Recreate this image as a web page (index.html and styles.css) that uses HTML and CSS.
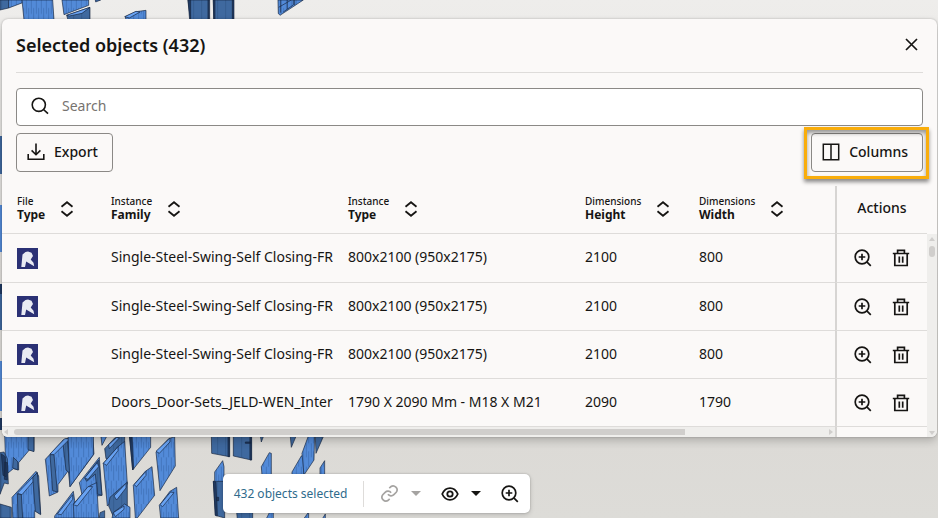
FILE: index.html
```html
<!DOCTYPE html>
<html lang="en">
<head>
<meta charset="utf-8">
<title>Selected objects</title>
<link rel="stylesheet" href="styles.css">
</head>
<body>
<svg class="scene" width="400" height="518" viewBox="0 0 400 518" aria-hidden="true">
  <defs>
    <pattern id="wood" width="15" height="70" patternUnits="userSpaceOnUse">
      <rect width="15" height="70" fill="#528ad8"/>
      <path d="M4 0v42M11 24v46" stroke="#3c6bb0" stroke-width="2"/>
    </pattern>
    <pattern id="dark" width="24" height="60" patternUnits="userSpaceOnUse">
      <rect width="24" height="60" fill="#3f699f"/>
      <path d="M5 0v60" stroke="#2f5588" stroke-width="2"/>
    </pattern>
  </defs>
  <!-- doors above the panel -->
  <g class="door" transform="scale(.3333)">
    <path class="deep" d="M0 0h28l-2 24-26 6z"/>
    <path class="face" d="M26 0h42v8L26 24z"/>
    <path class="face" d="M66 0h92l4 60H72z"/>
    <path class="face" d="M186 0h80v16l-74 28z"/>
    <path class="deep" d="M200 46l70-24v38h-66z"/>
    <path class="lite" d="M200 46l70-24-24 18-38 8z"/>
    <path class="face" d="M286 0h16l-15 6z"/>
    <path class="face" d="M376 50l32-15 30-4v30h-60z"/>
    <path class="lite" d="M374 50l34-16 12 2-32 18z"/>
    <path class="deep" d="M564 0h62v60h-54z"/>
    <path class="deep" d="M640 0h60v60h-58z"/>
    <path class="edge" d="M564 0h8v60h-3zM624 0h5v60h-5zM640 0h5v60h-4zM697 0h5v60h-5z"/>
    <path class="face" d="M834 0h76l-70 46-5-6z"/>
    <path class="line" d="M842 0v38M850 36L880 15V0M862 0v28M884 16V0M836 22l38-22"/>
  </g>
  <!-- slivers along the left side of the panel -->
  <g class="sliver">
    <path class="deep" d="M0 136h2v38H0z"/>
    <path class="face" d="M0 205h2v47H0z"/>
    <path class="edge" d="M0 284h2v10H0z"/>
    <path class="deep" d="M0 294h2v36H0z"/>
    <path class="face" d="M0 361h2v50H0z"/>
    <path class="edge" d="M0 418h2v12H0z"/>
  </g>
  <!-- doors below the panel, left cluster -->
  <g class="door" transform="translate(0 434) scale(.3333)">
    <path class="face" d="M14 0H102V50L88 48 56 86V108L40 104 18 122z"/>
    <path class="deep" d="M84 0h18v53l-18-6zM40 70l14 14v24l-16-6z"/>
    <path class="deep" d="M0 56l12-2 10 20 3 76-12-3-13 34z"/>
    <path class="edge" d="M4 60l12 8 2 60-9-4zM14 84l8 2v52l-9-2z"/>
    <path class="deep" d="M0 210l34 10v32H0z"/>
    <path class="face" d="M36 190L108 112 116 126 122 240 104 230V252H38z"/>
    <path class="lite" d="M52 178L104 124 112 116 112 128 66 182z"/>
    <path class="deep" d="M98 130l14-14 10 126-16-10zM52 180l12 2 4 70H54z"/>
    <path class="face" d="M136 76L190 18 210 12 278 0 282 60 210 158 205 110 174 152V174L148 186z"/>
    <path class="deep" d="M150 62l12 0 10 112-14-4zM188 20l14-6 8 104-12-10z"/>
    <path class="lite" d="M150 60l44-46h16l-48 48z"/>
    <path class="face" d="M204 0h76v62l-70 96z"/>
    <path class="face" d="M238 146L298 70 306 184 292 186 276 164 246 182z"/>
    <path class="deep" d="M254 132l42-54 10 106-14-4-6-60-26 22z"/>
    <path class="lite" d="M254 132l38-46 4 12-32 38z"/>
    <path class="face" d="M164 246L220 172 224 200V252h-60z"/>
    <path class="lite" d="M172 240l46-58v14l-34 46z"/>
    <path class="face" d="M220 210L268 156 290 146 296 252H222z"/>
    <path class="lite" d="M220 212l44-54h14l-46 58z"/>
    <path class="deep" d="M300 236l14-6v22h-16z"/>
    <path class="face" d="M302 0h22l-18 34z"/>
    <path class="deep" d="M314 44l30-32 30-8v70h-56z"/>
    <path class="lite" d="M326 32l24-22 8 2-30 32z"/>
    <path class="face" d="M310 88L354 38 374 22 382 150 322 216z"/>
    <path class="lite" d="M310 88l44-50v12l-34 44z"/>
    <path class="deep" d="M326 216l4-26 52-46v76l-40 32z"/>
    <path class="lite" d="M342 186l36-38v14l-28 36z"/>
    <path class="face" d="M340 236l34-26 16 10v32h-54z"/>
    <path class="lite" d="M340 236l32-20v10l-26 22z"/>
    <path class="face" d="M388 0h64v40l-54 68z"/>
    <path class="edge" d="M388 0h8l5 104-3 4z"/>
    <path class="face" d="M468 54L506 14 524 8 526 96 480 170z"/>
    <path class="lite" d="M468 52l42-40v12l-32 34z"/>
    <path class="face" d="M400 154L436 112 456 98 464 184 412 252H406z"/>
    <path class="lite" d="M402 152l36-40v12l-28 34z"/>
    <path class="face" d="M478 214L510 172 530 160 536 252H482z"/>
    <path class="lite" d="M480 212l32-38 10 2-34 42z"/>
  </g>
  <!-- doors below the panel, right cluster -->
  <g class="door" transform="translate(200 420) scale(.3333)">
    <path class="deep" d="M34 40h54v70l-53-10z"/>
    <path class="deep" d="M100 40h54v80l-54-12z"/>
    <path class="edge" d="M84 40h5v70h-5zM150 40h5v80h-5zM136 66l16 0v4h-16z"/>
    <path class="face" d="M44 156L68 122 72 140V190H44z"/>
    <path class="deep" d="M40 184h34v110L46 286z"/>
    <path class="edge" d="M40 184l8 2 4 102-6-2zM50 232h6v10h-6z"/>
    <path class="deep" d="M110 276h48v22h-46z"/>
    <path class="face" d="M184 140L208 98 214 100V165H186z"/>
    <path class="face" d="M198 298l10-20h12v20z"/>
    <path class="deep" d="M180 40h14l-10 26z"/>
    <path class="deep" d="M270 40h22l-18 42z"/>
    <path class="face" d="M276 156L304 108 312 104V165h-36z"/>
    <path class="face" d="M306 100L328 40h16L342 120 312 165z"/>
    <path class="deep" d="M346 50h24l-22 50z"/>
    <path class="face" d="M360 144l14-22v44h-14zM310 298l16-22v22zM366 298l10-16v16z"/>
  </g>
</svg>

<svg class="sprite" width="0" height="0" aria-hidden="true">
  <symbol id="i-sort" viewBox="0 0 14 16"><path d="M1.500 5.700L7 1.200l5.500 4.500M1.500 10.300L7 14.800l5.500-4.500" fill="none" stroke="currentColor" stroke-width="1.800"/></symbol>
  <symbol id="i-zoom" viewBox="0 0 18 18"><g fill="none" stroke="currentColor" stroke-width="1.700"><circle cx="8" cy="8" r="6.800"/><path d="M8 4.700v6.600M4.700 8h6.600M12.800 12.800l4 4"/></g></symbol>
  <symbol id="i-trash" viewBox="0 0 18 18"><g fill="none" stroke="currentColor" stroke-width="1.700"><path d="M.8 4.500h16.400M5.600 4.500V1.400h6.800v3.100M2.800 4.500v12h12.400v-12M7.300 7.400v6.400M10.700 7.400v6.400"/></g></symbol>
  <symbol id="i-rvt" viewBox="0 0 21 21"><rect width="21" height="21" fill="#2b3175"/><path d="M5.500 6.500l3-2.500 2.500-.6 3.500 1.400 1.500 3.200-2.300 3.500 2.800 3.200.7 3.600-6-3.500-2-1.400L8 19H4.300z" fill="#e9ebf3"/></symbol>
</svg>

<section class="panel" aria-labelledby="title">
  <header class="head">
    <h1 id="title">Selected objects (432)</h1>
    <button class="close" aria-label="Close"><svg width="13" height="13" viewBox="0 0 13 13"><path d="M1 1l11 11M12 1L1 12" stroke="currentColor" stroke-width="1.700"/></svg></button>
  </header>

  <div class="tools">
    <label class="search">
      <svg width="18" height="18" viewBox="0 0 18 18" aria-hidden="true"><g fill="none" stroke="currentColor" stroke-width="1.600"><circle cx="7.800" cy="7.800" r="6.600"/><path d="M12.500 12.500l4.500 4.200"/></g></svg>
      <input type="search" placeholder="Search" aria-label="Search">
    </label>
    <div class="buttons">
      <button class="btn"><svg width="18" height="18" viewBox="0 0 18 18" aria-hidden="true"><path d="M9 .5v11M4.600 7.400L9 11.700l4.400-4.300M1.200 11v5.300h15.600V11" fill="none" stroke="currentColor" stroke-width="1.600"/></svg>Export</button>
      <div class="marked">
        <button class="btn"><svg width="18" height="18" viewBox="0 0 18 18" aria-hidden="true"><path d="M1.300 1.300h15.400v15.400H1.300zM9 1v16" fill="none" stroke="currentColor" stroke-width="1.500"/></svg>Columns</button>
      </div>
    </div>
  </div>

  <div class="grid">
    <table>
      <colgroup><col class="c-file"><col class="c-family"><col class="c-type"><col class="c-height"><col class="c-width"><col class="c-actions"></colgroup>
      <thead>
        <tr>
          <th><button class="sort"><span>File<b>Type</b></span><svg width="14" height="16"><use href="#i-sort"/></svg></button></th>
          <th><button class="sort"><span>Instance<b>Family</b></span><svg width="14" height="16"><use href="#i-sort"/></svg></button></th>
          <th><button class="sort"><span>Instance<b>Type</b></span><svg width="14" height="16"><use href="#i-sort"/></svg></button></th>
          <th><button class="sort"><span>Dimensions<b>Height</b></span><svg width="14" height="16"><use href="#i-sort"/></svg></button></th>
          <th><button class="sort"><span>Dimensions<b>Width</b></span><svg width="14" height="16"><use href="#i-sort"/></svg></button></th>
          <th class="actions">Actions</th>
        </tr>
      </thead>
      <tbody>
        <tr>
          <td><svg class="file" width="21" height="21"><use href="#i-rvt"/></svg></td>
          <td>Single-Steel-Swing-Self Closing-FR</td><td>800x2100 (950x2175)</td><td>2100</td><td>800</td>
          <td class="actions"><button aria-label="Zoom to object"><svg width="18" height="18"><use href="#i-zoom"/></svg></button><button aria-label="Delete"><svg width="18" height="18"><use href="#i-trash"/></svg></button></td>
        </tr>
        <tr>
          <td><svg class="file" width="21" height="21"><use href="#i-rvt"/></svg></td>
          <td>Single-Steel-Swing-Self Closing-FR</td><td>800x2100 (950x2175)</td><td>2100</td><td>800</td>
          <td class="actions"><button aria-label="Zoom to object"><svg width="18" height="18"><use href="#i-zoom"/></svg></button><button aria-label="Delete"><svg width="18" height="18"><use href="#i-trash"/></svg></button></td>
        </tr>
        <tr>
          <td><svg class="file" width="21" height="21"><use href="#i-rvt"/></svg></td>
          <td>Single-Steel-Swing-Self Closing-FR</td><td>800x2100 (950x2175)</td><td>2100</td><td>800</td>
          <td class="actions"><button aria-label="Zoom to object"><svg width="18" height="18"><use href="#i-zoom"/></svg></button><button aria-label="Delete"><svg width="18" height="18"><use href="#i-trash"/></svg></button></td>
        </tr>
        <tr>
          <td><svg class="file" width="21" height="21"><use href="#i-rvt"/></svg></td>
          <td>Doors_Door-Sets_JELD-WEN_Interi</td><td>1790 X 2090 Mm - M18 X M21</td><td>2090</td><td>1790</td>
          <td class="actions"><button aria-label="Zoom to object"><svg width="18" height="18"><use href="#i-zoom"/></svg></button><button aria-label="Delete"><svg width="18" height="18"><use href="#i-trash"/></svg></button></td>
        </tr>
      </tbody>
    </table>
    <div class="vbar"><i class="up"></i><i class="thumb"></i><i class="down"></i></div>
    <div class="foot">
      <div class="hbar"><i class="left"></i><div class="track"><i class="thumb"></i></div><i class="right"></i></div>
      <div class="stub"></div>
    </div>
  </div>
</section>

<div class="toolbar">
  <a href="#title">432 objects selected</a>
  <span class="sep"></span>
  <button class="off" disabled aria-label="Link"><svg width="19" height="19" viewBox="0 0 24 24"><path d="M10 13a5 5 0 0 0 7.500.5l3-3a5 5 0 0 0-7-7l-1.800 1.700M14 11a5 5 0 0 0-7.500-.5l-3 3a5 5 0 0 0 7 7l1.700-1.700" fill="none" stroke="currentColor" stroke-width="2.100"/></svg><i class="caret"></i></button>
  <button aria-label="Visibility"><svg width="18" height="14" viewBox="0 0 18 14"><g fill="none" stroke="currentColor" stroke-width="1.800"><path d="M1.200 7C3 3 5.800 1.100 9 1.100S15 3 16.800 7C15 11 12.200 12.900 9 12.900S3 11 1.200 7z"/><circle cx="9" cy="7" r="2.700"/></g></svg><i class="caret"></i></button>
  <button class="last" aria-label="Zoom in"><svg width="18" height="18"><use href="#i-zoom"/></svg></button>
</div>
</body>
</html>
```

FILE: styles.css
```css
* { box-sizing: border-box; }

body {
  margin: 0;
  min-height: 100vh;
  padding: 19px 1px 5px 2px;
  display: flex;
  flex-direction: column;
  justify-content: space-between;
  overflow: hidden;
  background: linear-gradient(#eeedeb, #e2e0dd 50%, #dcdad6 85%, #dddcd8);
  color: #161513;
  font: 14px/20px "Noto Sans", "Open Sans", sans-serif;
}

button {
  border: 0;
  padding: 0;
  background: none;
  color: inherit;
  font: inherit;
}

svg { display: block; flex: none; }

.scene { position: absolute; left: 0; top: 0; z-index: -1; }
.sprite { position: absolute; }
.door { stroke: #16263f; stroke-width: 2; }
.face { fill: url(#wood); }
.deep { fill: url(#dark); }
.lite { fill: #68a2f2; }
.edge { fill: #203a62; }
.line { fill: none; }
.sliver .face { fill: #528ad8; }
.sliver .deep { fill: #3f699f; }

.panel {
  border-radius: 6px;
  background: #fbf9f8;
  box-shadow: 0 0 2px rgba(0, 0, 0, .25), 0 4px 8px rgba(0, 0, 0, .2);
  overflow: hidden;
}

.head {
  display: flex;
  align-items: center;
  justify-content: space-between;
  margin: 0 14px;
  height: 54px;
  padding-bottom: 2px;
  border-bottom: 1px solid #dedcda;
}

h1 { margin: 0; font-size: 18px; line-height: 24px; font-weight: 600; }
.close { padding: 5px; }

.tools {
  display: flex;
  flex-direction: column;
  gap: 7px;
  padding: 15px 14px 14px;
}

.search {
  display: flex;
  align-items: center;
  gap: 13px;
  height: 38px;
  padding: 0 14px 2px;
  border: 1px solid #8b8986;
  border-radius: 4px;
  background: #fff;
}

.search input {
  flex: 1;
  min-width: 0;
  border: 0;
  padding: 0;
  outline: 0;
  background: none;
  font: inherit;
}

.search input::placeholder { color: #77736f; opacity: 1; }

.buttons { display: flex; justify-content: space-between; }

.btn {
  display: flex;
  align-items: center;
  gap: 9px;
  height: 39px;
  padding: 0 14px 2px 10px;
  border: 1px solid #8b8986;
  border-radius: 4px;
  font-weight: 500;
}

.marked { position: relative; }

.marked::after {
  content: "";
  position: absolute;
  inset: -6px -6px -7px -7px;
  border: 3px solid #f9ad0b;
  box-shadow: 0 3px 4px rgba(0, 0, 0, .45), inset 0 3px 4px rgba(0, 0, 0, .4);
  pointer-events: none;
}

.grid { display: grid; grid-template-columns: minmax(0, 1fr) 10px; }

table { width: 100%; table-layout: fixed; border-collapse: separate; border-spacing: 0; }
.c-file { width: 94px; }
.c-family { width: 237px; }
.c-type { width: 237px; }
.c-height { width: 114px; }
.c-actions { width: 92px; }

th, td {
  height: 48px;
  padding: 0 0 2px 15px;
  border-bottom: 1px solid #dedcda;
  text-align: left;
  white-space: nowrap;
  overflow: hidden;
}

th { padding-bottom: 4px; font-weight: 500; }
tbody tr:first-child td { height: 49px; }
.file { margin-top: 2px; }

.sort {
  display: flex;
  align-items: center;
  gap: 15px;
  text-align: left;
  font-size: 10px;
  line-height: 14px;
}

.sort b { display: block; font-size: 12px; }
.sort svg { margin-top: 2px; }

th.actions, td.actions {
  padding-left: 0;
  border-left: 2px solid #d7d5d3;
  text-align: center;
}

td.actions button { display: inline-block; margin: 0 10px; vertical-align: middle; }

.vbar {
  grid-row: 1 / span 2;
  grid-column: 2;
  display: flex;
  flex-direction: column;
  align-items: center;
  margin-top: 48px;
  padding: 3px 0 2px;
  background: #efeeec;
}

.vbar .thumb { width: 6px; height: 11px; margin: 5px 0 auto; border-radius: 3px; background: #d0cecc; }

.up, .down, .left, .right { width: 0; height: 0; border: 3px solid transparent; }
.up { border-top: 0; border-bottom: 4px solid #d0cecc; }
.down { border-bottom: 0; border-top: 4px solid #d0cecc; }
.left { border-left: 0; border-right: 4px solid #d0cecc; }
.right { border-right: 0; border-left: 4px solid #d0cecc; }

.foot { display: flex; height: 10px; }

.hbar {
  flex: 1;
  display: flex;
  align-items: center;
  justify-content: space-between;
  gap: 6px;
  padding: 0 2px;
  background: #efeeec;
}

.track { flex: 1; }
.track .thumb { display: block; width: 83%; height: 6px; border-radius: 3px 0 0 3px; background: #d0cecc; }
.stub { width: 92px; border-left: 2px solid #d7d5d3; }

.toolbar {
  display: flex;
  align-items: center;
  align-self: flex-start;
  height: 39px;
  margin-left: 23.6%;
  padding: 0 11px;
  gap: 16px;
  border-radius: 5px;
  background: #fff;
  box-shadow: 0 0 2px rgba(0, 0, 0, .25), 0 2px 5px rgba(0, 0, 0, .15);
}

.toolbar a { color: #2f6b8c; font-size: 12px; text-decoration: none; }
.sep { width: 1px; height: 26px; background: #dedcda; }
.toolbar button { display: flex; align-items: center; gap: 12px; }
.toolbar .off { color: #a5a3a1; margin-right: 4px; }
.toolbar .last { margin-left: 4px; }
.caret { border: 5px solid transparent; border-bottom: 0; border-top-color: currentColor; }
```
